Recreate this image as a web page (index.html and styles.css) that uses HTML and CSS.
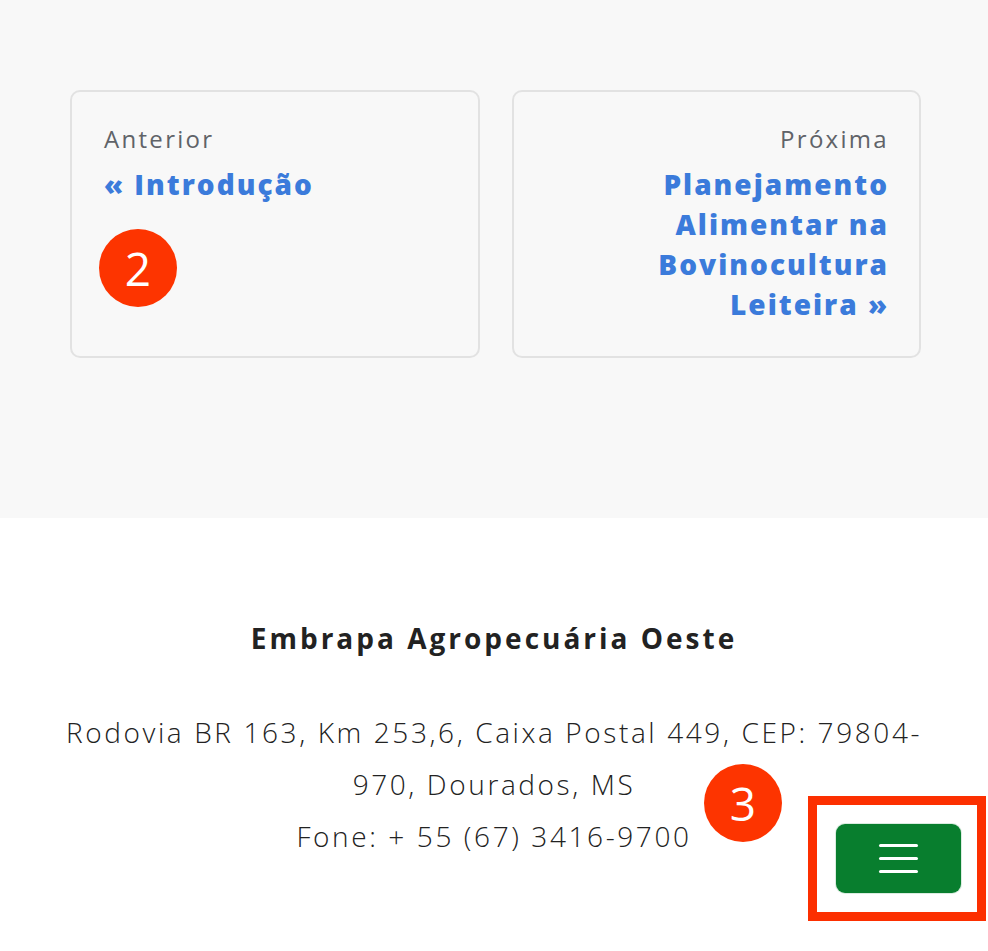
FILE: index.html
```html
<!DOCTYPE html>
<html lang="pt-BR">
<head>
<meta charset="utf-8">
<title>Navegação</title>
<link rel="stylesheet" href="styles.css">
</head>
<body>
<section class="post-nav">
  <div class="cards">
    <a class="card card-prev" href="#">
      <span class="label">Anterior</span>
      <span class="link">« Introdução</span>
      <span class="badge badge-2">2</span>
    </a>
    <a class="card card-next" href="#">
      <span class="label">Próxima</span>
      <span class="link">Planejamento Alimentar na Bovinocultura Leiteira »</span>
    </a>
  </div>
</section>
<footer class="footer">
  <h2 class="footer-title">Embrapa Agropecuária Oeste</h2>
  <p class="address">Rodovia BR 163, Km 253,6, Caixa Postal 449, CEP: 79804-970, Dourados, MS<br>Fone: + 55 (67) 3416-9700</p>
  <span class="badge badge-3">3</span>
  <div class="highlight">
    <button class="menu-btn" aria-label="Menu">
      <span></span><span></span><span></span>
    </button>
  </div>
</footer>
</body>
</html>
```
FILE: styles.css
```css
* { box-sizing: border-box; }
html, body { margin: 0; padding: 0; }
body {
  font-family: "Open Sans", "Noto Sans", sans-serif;
  background: #fff;
  width: 988px;
  height: 951px;
  overflow: hidden;
  position: relative;
}
.post-nav {
  background: #f8f8f8;
  padding: 90px 67px 160px 70px;
  height: 518px;
}
.cards {
  display: grid;
  grid-template-columns: 410px 409px;
  gap: 32px;
}
.card {
  position: relative;
  display: flex;
  flex-direction: column;
  align-items: flex-start;
  height: 268px;
  border: 2px solid #e2e2e2;
  border-radius: 10px;
  padding: 27px 32px 0 32px;
  text-decoration: none;
}
.card-next { align-items: flex-end; text-align: right; }
.label {
  font-size: 24px;
  line-height: 40px;
  color: #606368;
  font-weight: 400;
  letter-spacing: 2.3px;
}
.card-prev .label { margin-left: 0; }
.card-next .label { margin-right: -2px; }
.link {
  margin-top: 5px;
  font-size: 28px;
  line-height: 40px;
  font-weight: 800;
  color: #3b7bdb;
  letter-spacing: 2px;
}
.card-next .link { margin-right: -2px; }
.badge {
  position: absolute;
  width: 78px;
  height: 78px;
  border-radius: 50%;
  background: #fd3400;
  color: #fff;
  font-family: "Open Sans", sans-serif;
  font-size: 46px;
  line-height: 78px;
  text-align: center;
  font-weight: 400;
  letter-spacing: 0;
}
.badge-2 { left: 27px; top: 137px; }
.footer {
  padding: 100px 40px 0;
  text-align: center;
  color: #222;
}
.footer-title {
  margin: 0;
  font-size: 28px;
  line-height: 40px;
  font-weight: 700;
  letter-spacing: 3px;
}
.address {
  margin: 48px 0 0;
  font-size: 28px;
  line-height: 52px;
  font-weight: 300;
  letter-spacing: 2.6px;
}
.badge-3 { left: 704px; top: 764px; }
.highlight {
  position: absolute;
  left: 808px;
  top: 796px;
  width: 178px;
  height: 125px;
  border: 9px solid #fc2f00;
  display: flex;
  align-items: center;
  justify-content: center;
  padding-left: 2px;
}
.menu-btn {
  width: 125px;
  height: 69px;
  background: #087e2e;
  border: none;
  border-radius: 9px;
  display: flex;
  flex-direction: column;
  align-items: center;
  justify-content: center;
  gap: 10px;
  padding: 0;
  box-shadow: 0 0 0 1px rgba(8, 126, 46, 0.15);
}
.menu-btn span {
  display: block;
  width: 39px;
  height: 3px;
  border-radius: 2px;
  background: #fff;
}
```
